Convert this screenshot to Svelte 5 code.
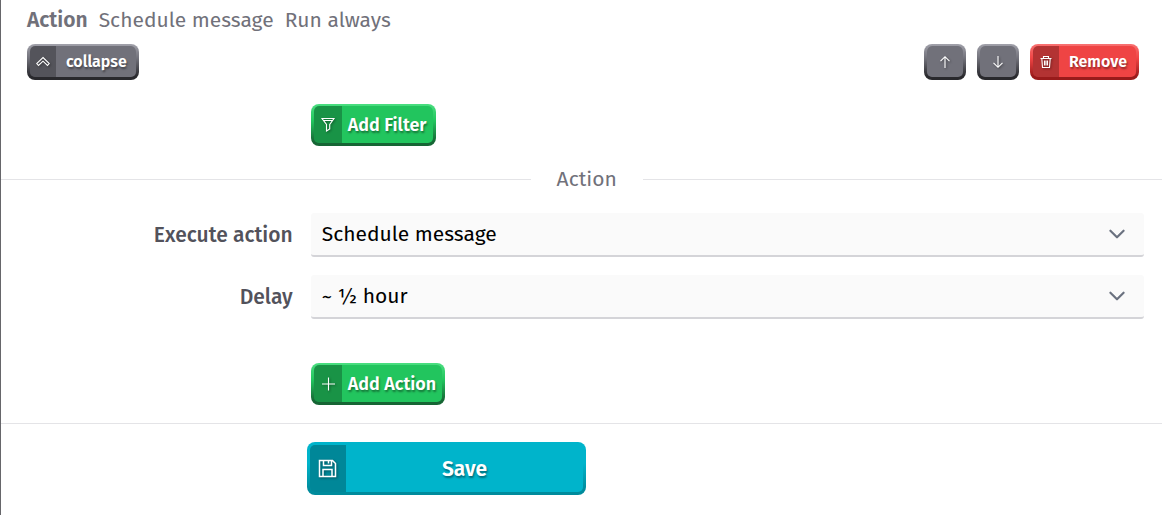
<script>
  let action = $state('schedule');
  let delay = $state('30');
</script>

<main>
  <header>
    <strong>Action</strong><span>Schedule message</span><span>Run always</span>
  </header>

  <div class="toolbar">
    <button type="button" class="btn small gray">
      <span class="icon">
        <svg width="14" height="14" viewBox="0 0 14 14"><path d="M7 2.500 13.300 8.500 11.500 10.500 7 6.200 2.500 10.500.7 8.500Z" /></svg>
      </span>
      <span class="label">collapse</span>
    </button>
    <div class="tools">
      <button type="button" class="btn small gray square" aria-label="Move up">
        <svg width="14" height="14" viewBox="0 0 14 14"><path d="M7 13V2M2.500 6.200 7 1.700l4.500 4.500" /></svg>
      </button>
      <button type="button" class="btn small gray square" aria-label="Move down">
        <svg width="14" height="14" viewBox="0 0 14 14"><path d="M7 1v11M2.500 7.800 7 12.300l4.500-4.500" /></svg>
      </button>
      <button type="button" class="btn small red">
        <span class="icon">
          <svg width="14" height="14" viewBox="0 0 14 14"><path d="M1.500 3.500h11M4.500 3.500v-2h5v2M2.800 3.500l.7 9h7l.7-9M5.500 5.500v5M7 5.500v5M8.500 5.500v5" /></svg>
        </span>
        <span class="label">Remove</span>
      </button>
    </div>
  </div>

  <div class="row filter">
    <button type="button" class="btn medium green">
      <span class="icon">
        <svg width="16" height="16" viewBox="0 0 16 16"><path d="M2 1.500h12L9.700 7.500v4.500L6.500 14V7.500ZM2 1.500l1.500 2h9.500" /></svg>
      </span>
      <span class="label">Add Filter</span>
    </button>
  </div>

  <h2>Action</h2>

  <div class="row field">
    <label for="action">Execute action</label>
    <select id="action" bind:value={action}>
      <option value="schedule">Schedule message</option>
    </select>
  </div>
  <div class="row field">
    <label for="delay">Delay</label>
    <select id="delay" bind:value={delay}>
      <option value="30">~ ½ hour</option>
    </select>
  </div>

  <div class="row add">
    <button type="button" class="btn medium green">
      <span class="icon">
        <svg width="16" height="16" viewBox="0 0 16 16"><path d="M8.500 1.500v13M2 8h13" /></svg>
      </span>
      <span class="label">Add Action</span>
    </button>
  </div>

  <footer>
    <button type="submit" class="btn large cyan">
      <span class="icon">
        <svg width="20" height="20" viewBox="0 0 20 20"><path d="M1.500 1.500h13l3 3v13h-16ZM5.500 1.500v5h8v-5M10.500 2v2.500M5 17.500v-7h9v7" /></svg>
      </span>
      <span class="label">Save</span>
    </button>
  </footer>
</main>

<style>
  :global(body) {
    margin: 0;
    background: #fff;
  }
  main {
    box-sizing: border-box;
    min-height: 100vh;
    border-left: 1px solid #66666a;
    font-family: 'Fira Sans', 'Noto Sans', sans-serif;
    font-size: 21px;
    line-height: 28px;
    color: #71717a;
  }
  header {
    display: flex;
    gap: 11px;
    padding: 6px 26px 0;
  }
  strong {
    font-weight: 600;
  }
  .toolbar {
    display: flex;
    justify-content: space-between;
    padding: 10px 23px 0 26px;
  }
  .tools {
    display: flex;
    gap: 11px;
  }
  .btn {
    display: inline-flex;
    align-items: stretch;
    box-sizing: border-box;
    margin: 0;
    padding: 0;
    border: 3px solid transparent;
    border-top-width: 2px;
    border-radius: 8px;
    background:
      linear-gradient(var(--face), var(--face)) padding-box,
      linear-gradient(var(--light), var(--face) 40%, var(--dark) 90%) border-box;
    color: #fff;
    font: inherit;
    font-weight: 600;
    text-shadow: 1px 2px 2px rgb(0 0 0 / 40%);
    cursor: pointer;
  }
  .gray {
    --face: #71717a;
    --light: #a1a1aa;
    --dark: #29292d;
  }
  .red {
    --face: #ef4444;
    --light: #f87171;
    --dark: #991b1b;
  }
  .green {
    --face: #22c55e;
    --light: #4ade80;
    --dark: #166534;
  }
  .cyan {
    --face: #00b4cb;
    --light: #00b4cb;
    --dark: #008b9c;
  }
  .btn svg {
    fill: none;
    stroke: #fff;
    stroke-width: 1.1;
    filter: drop-shadow(1px 1px 1px rgb(0 0 0 / 40%));
  }
  .icon {
    display: flex;
    align-items: center;
    justify-content: center;
    width: 26px;
    border-radius: 5px 0 0 5px;
    background: rgb(0 0 0 / 25%);
  }
  .label {
    display: flex;
    align-items: center;
    justify-content: center;
  }
  .small {
    height: 36px;
    font-size: 16px;
  }
  .small .label {
    padding: 0 9px 0 10px;
  }
  .square {
    align-items: center;
    justify-content: center;
    width: 42px;
  }
  .medium {
    justify-self: start;
    grid-column: 2;
    height: 42px;
    font-size: 18px;
  }
  .medium .icon {
    width: 28px;
  }
  .medium .label {
    padding: 0 6px;
  }
  .row {
    display: grid;
    grid-template-columns: 1fr 3fr;
    column-gap: 18px;
    align-items: center;
    padding: 0 18px 0 14px;
  }
  .filter {
    padding-top: 24px;
  }
  h2 {
    display: flex;
    align-items: center;
    gap: 26px;
    margin: 19px 0 20px;
    font-size: 21px;
    font-weight: 400;
  }
  h2::before,
  h2::after {
    content: '';
    flex: 51;
    height: 1px;
    background: #e4e4e7;
  }
  h2::after {
    flex: 50;
  }
  .field {
    margin-bottom: 18px;
  }
  label {
    text-align: right;
    font-weight: 500;
    color: #52525b;
  }
  select {
    appearance: none;
    box-sizing: border-box;
    width: 100%;
    height: 44px;
    padding: 0 48px 0 11px;
    border: 0;
    border-bottom: 2px solid #d4d4d8;
    border-radius: 3px;
    background: #fafafa url("data:image/svg+xml,%3Csvg xmlns='http://www.w3.org/2000/svg' viewBox='0 0 20 20' fill='none' stroke='%236b7280' stroke-width='2' stroke-linecap='round' stroke-linejoin='round'%3E%3Cpath d='M4 7l6 6 6-6'/%3E%3C/svg%3E") no-repeat right 16px center / 22px;
    color: #000;
    font: inherit;
  }
  .add {
    padding-top: 26px;
  }
  footer {
    display: grid;
    grid-template-columns: repeat(4, 1fr);
    margin-top: 18px;
    padding: 18px 18px 20px 27px;
    border-top: 1px solid #e4e4e7;
  }
  .large {
    grid-column: 2;
    height: 53px;
    border-top-width: 3px;
    font-size: 21px;
  }
  .large svg {
    stroke-width: 1.5;
  }
  .large .icon {
    width: 36px;
  }
  .large .label {
    flex: 1;
  }
</style>
